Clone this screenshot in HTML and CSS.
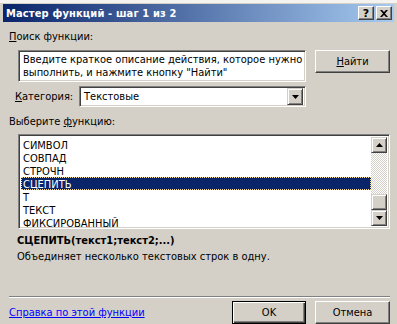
FILE: index.html
```html
<!DOCTYPE html>
<html lang="ru">
<head>
<meta charset="utf-8">
<title>Мастер функций</title>
<link rel="stylesheet" href="styles.css">
</head>
<body>
<div class="topstrip"></div>
<div class="win">
  <div class="titlebar">
    <span class="title">Мастер функций - шаг 1 из 2</span>
    <div class="tbtns">
      <span class="tbtn tq">?</span>
      <span class="tbtn">
        <svg width="8" height="7" viewBox="0 0 8 7"><path d="M0 0h2l2 2l2-2h2l-3 3.5l3 3.5h-2l-2-2l-2 2h-2l3-3.5z" fill="#000"/></svg>
      </span>
    </div>
  </div>
  <div class="content">
    <div class="lbl lbl-search"><u>П</u>оиск функции:</div>
    <div class="searchrow">
      <div class="edit searchbox">Введите краткое описание действия, которое нужно выполнить, и нажмите кнопку "Найти"</div>
      <div class="btn btn-find"><span><u>Н</u>айти</span></div>
    </div>
    <div class="catrow">
      <span class="lbl"><u>К</u>атегория:</span>
      <div class="edit combo">
        <span class="combotext">Текстовые</span>
        <span class="sbtn combobtn"><svg width="7" height="4" viewBox="0 0 7 4"><path d="M0 0h7l-3.5 4z" fill="#000"/></svg></span>
      </div>
    </div>
    <div class="lbl lbl-choose">Выберите <u>ф</u>ункцию:</div>
    <div class="edit list">
      <div class="rows">
        <div class="row">СИМВОЛ</div>
        <div class="row">СОВПАД</div>
        <div class="row">СТРОЧН</div>
        <div class="row sel">СЦЕПИТЬ</div>
        <div class="row">Т</div>
        <div class="row">ТЕКСТ</div>
        <div class="row">ФИКСИРОВАННЫЙ</div>
      </div>
      <div class="scrollbar">
        <span class="sbtn sq"><svg width="7" height="4" viewBox="0 0 7 4"><path d="M0 4h7l-3.5-4z" fill="#000"/></svg></span>
        <span class="track"></span>
        <span class="sbtn sq"></span>
        <span class="sbtn sq"><svg width="7" height="4" viewBox="0 0 7 4"><path d="M0 0h7l-3.5 4z" fill="#000"/></svg></span>
      </div>
    </div>
    <div class="sig">СЦЕПИТЬ(текст1;текст2;...)</div>
    <div class="desc">Объединяет несколько текстовых строк в одну.</div>
    <div class="sep"></div>
    <div class="footer">
      <a class="help" href="#">Справка по этой функции</a>
      <div class="btn btn-ok"><span>OK</span></div>
      <div class="btn btn-cancel"><span>Отмена</span></div>
    </div>
  </div>
</div>
</body>
</html>
```
FILE: styles.css
```css
* { box-sizing: border-box; }
html, body { margin: 0; padding: 0; }
body {
  width: 397px;
  height: 324px;
  overflow: hidden;
  background: #D4D0C8;
  font-family: "DejaVu Sans", "Liberation Sans", sans-serif;
  font-stretch: condensed;
  font-size: 11px;
  color: #000;
}
.topstrip { height: 3px; background: #F4F3EF; }
.win { padding: 1px 3px 0 3px; }
.titlebar {
  height: 18px;
  background: linear-gradient(to right, #0A246A, #A6CAF0);
  display: flex;
  align-items: center;
  justify-content: space-between;
  padding: 0 2px 0 3px;
}
.title { color: #fff; font-weight: bold; font-size: 11px; line-height: 13px; letter-spacing: 0.15px; }
.tbtns { display: flex; gap: 2px; }
.tbtn {
  width: 16px; height: 14px;
  background: #D4D0C8;
  border: 1px solid; border-color: #fff #404040 #404040 #fff;
  box-shadow: inset -1px -1px #808080;
  display: flex; align-items: center; justify-content: center;
}
.tq { font-weight: bold; font-size: 11px; line-height: 11px; font-stretch: normal; }
.content { padding: 0 4px 0 6px; }
.lbl { line-height: 13px; }
.lbl-search { margin-top: 8px; }
.searchrow { display: flex; margin-top: 7px; height: 32px; }
.edit {
  background: #fff;
  border: 1px solid; border-color: #808080 #fff #fff #808080;
  box-shadow: inset 1px 1px #404040, inset -1px -1px #D4D0C8;
}
.searchbox {
  margin-left: 9px;
  width: 288px; height: 32px;
  padding: 2px 2px 0 4px;
  line-height: 13px;
}
.btn {
  background: #D4D0C8;
  border: 1px solid; border-color: #fff #404040 #404040 #fff;
  box-shadow: inset -1px -1px #808080;
  display: flex; align-items: center; justify-content: center;
  width: 75px; height: 23px;
  line-height: 13px;
}
.btn-find { margin-left: 9px; }
.catrow { display: flex; align-items: center; margin-top: 4px; height: 21px; }
.catrow .lbl { margin-left: 6px; width: 64px; }
.combo {
  width: 227px; height: 21px;
  display: flex; align-items: center; justify-content: space-between;
  padding: 2px 2px 2px 4px;
}
.combotext { line-height: 13px; }
.sbtn {
  background: #D4D0C8;
  border: 1px solid; border-color: #D4D0C8 #404040 #404040 #D4D0C8;
  box-shadow: inset 1px 1px #fff, inset -1px -1px #808080;
  display: flex; align-items: center; justify-content: center;
}
.combobtn { width: 16px; height: 17px; }
.lbl-choose { margin-top: 8px; }
.list {
  margin-top: 6px; margin-left: 9px;
  width: 372px; height: 95px;
  padding: 2px;
  display: flex;
  overflow: hidden;
}
.rows { flex: 1; padding-top: 1px; }
.row { height: 13px; line-height: 11px; padding: 2px 0 0 2px; white-space: nowrap; }
.row.sel {
  background: #0A246A; color: #fff;
  outline: 1px dotted #F5DB95; outline-offset: -1px;
}
.scrollbar { width: 16px; display: flex; flex-direction: column; }
.sq { width: 16px; height: 16px; flex: none; }
.track {
  flex: 1;
  background: repeating-conic-gradient(#fff 0 25%, #D4D0C8 0 50%) 0 0 / 2px 2px;
}
.sig { font-weight: bold; margin-top: 5px; margin-left: 8px; line-height: 13px; }
.desc { margin-top: 3px; margin-left: 8px; line-height: 13px; }
.sep { margin-top: 33px; height: 2px; border-top: 1px solid #808080; border-bottom: 1px solid #fff; width: 381px; }
.footer { display: flex; align-items: center; margin-top: 3px; }
.help { flex: 1; color: #0000FF; text-decoration: underline; line-height: 13px; }
.btn-ok { width: 74px; border: 1px solid #000; box-shadow: inset 1px 1px #fff, inset -1px -1px #404040, inset -2px -2px #808080; }
.btn-cancel { margin-left: 9px; }
```
